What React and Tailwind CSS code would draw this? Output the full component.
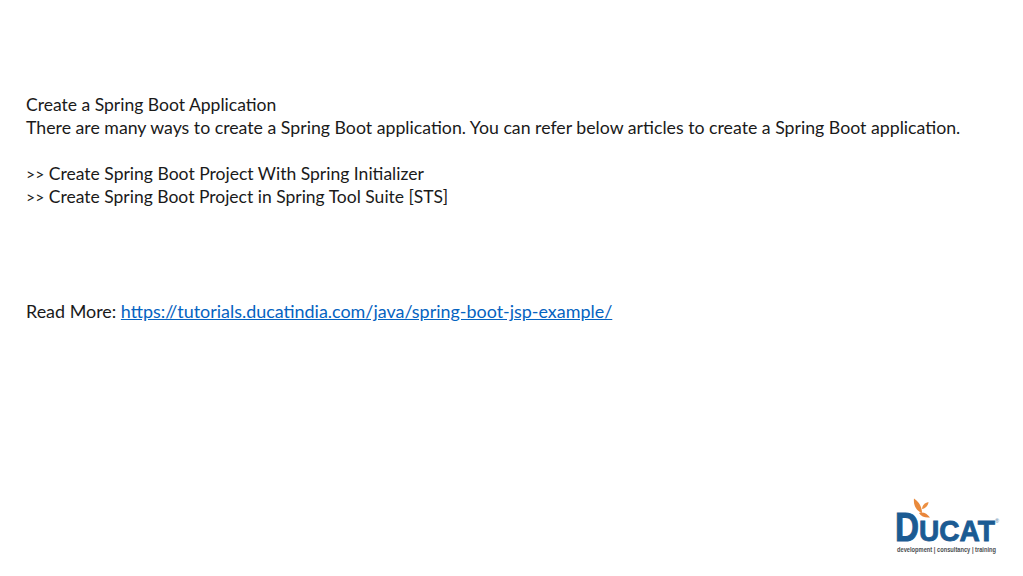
function Logo() {
  const blue = "#1b5b93";
  return (
    <svg width="104" height="58" viewBox="0 0 104 58" className="block">
      <path d="M18 1.500 C22 4 26 9 26 16 C21 14 17 9 18 1.500 Z" fill="#e98a3c" />
      <path d="M26 12 C26.500 8 28.500 6 32.500 5 C32 9 29.500 11.500 26 12 Z" fill="#ec8f40" />
      <path d="M23 16 C27 14.500 31 16.500 34 20.500 C29 21 25 19.500 23 16 Z" fill="#e9863a" />
      <text x="-1" y="44" fontFamily="Liberation Sans, sans-serif" fontWeight="700" fontSize="41" fill={blue} stroke={blue} strokeWidth="1" textLength="24" lengthAdjust="spacingAndGlyphs">D</text>
      <text x="23" y="44" fontFamily="Liberation Sans, sans-serif" fontWeight="700" fontSize="30" fill={blue} stroke={blue} strokeWidth="0.9" textLength="76" lengthAdjust="spacingAndGlyphs">UCAT</text>
      <text x="99" y="26" fontFamily="Liberation Sans, sans-serif" fontSize="5.500" fill="#4c7da6">®</text>
      <text x="1" y="54.500" fontFamily="Liberation Sans, sans-serif" fontWeight="700" fontSize="6.400" fill="#4a4d4f" textLength="99" lengthAdjust="spacingAndGlyphs">development | consultancy | training</text>
    </svg>
  );
}

export default function App() {
  return (
    <div className="flex flex-col w-[1023px] h-[576px] bg-white overflow-hidden font-['Lato',sans-serif] text-[#1a1a1a] text-[17.7px] leading-[23px]">
      <div className="pl-[26px] pt-[93px]">
        <p className="text-[17.55px]">Create a Spring Boot Application</p>
        <p className="text-[17.73px]">There are many ways to create a Spring Boot application. You can refer below articles to create a Spring Boot application.</p>
        <p className="h-[23px]"></p>
        <p className="text-[17.55px]"><span className="text-[15.800px]">&gt;&gt;</span> Create Spring Boot Project With Spring Initializer</p>
        <p className="text-[17.5px]"><span className="text-[15.800px]">&gt;&gt;</span> Create Spring Boot Project in Spring Tool Suite [STS]</p>
        <p className="mt-[92px] text-[17.93px]">Read More: <a className="text-[#0563c1] underline">https://tutorials.ducatindia.com/java/spring-boot-jsp-example/</a></p>
      </div>
      <div className="mt-auto flex justify-end pr-[23px] pb-[21px]">
        <Logo />
      </div>
    </div>
  );
}
